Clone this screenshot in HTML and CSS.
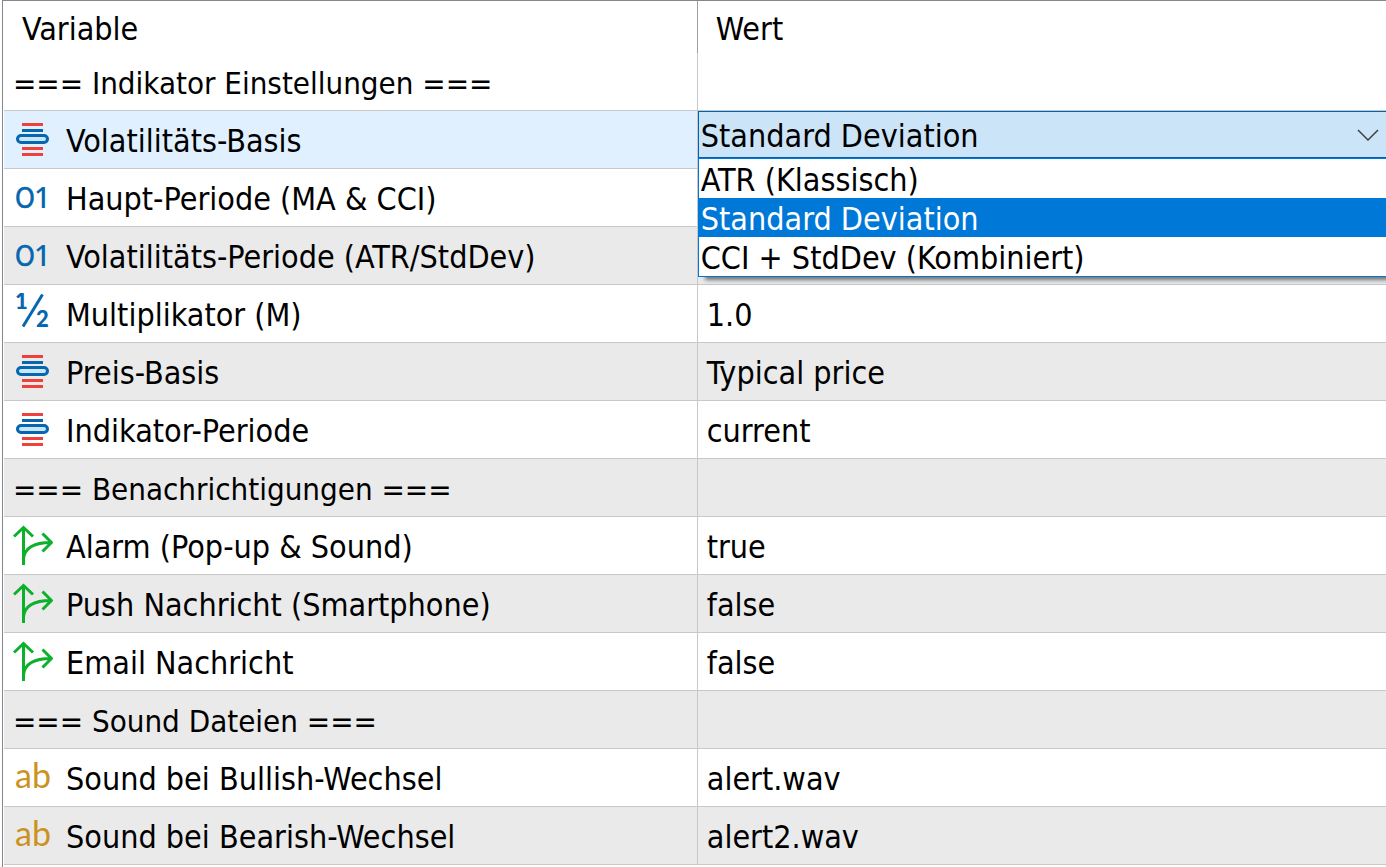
FILE: index.html
```html
<!DOCTYPE html>
<html lang="de">
<head>
    <meta charset="UTF-8">
    <meta name="viewport" content="width=device-width, initial-scale=1.0">
    <title>Indikator Einstellungen</title>
    <link rel="stylesheet" href="styles.css">
</head>
<body>
    <!-- Icons for the parameter types -->
    <svg class="sprite" aria-hidden="true">
        <symbol id="icon-enum" viewBox="0 0 40 41">
            <path d="M9 4h21v3H9zM9 28h21v3H9zM9 34h21v3H9z" fill="#ee413b"/>
            <path d="M9 10h21v3H9z" fill="#0666ae"/>
            <rect x="4.5" y="16.5" width="30" height="7" rx="3.5" fill="#c9e6fb" stroke="#0666ae" stroke-width="3"/>
        </symbol>
        <symbol id="icon-int" viewBox="0 0 40 41">
            <text class="glyph-int" x="2" y="31">O</text>
            <text class="glyph-one" x="21" y="31">1</text>
        </symbol>
        <symbol id="icon-double" viewBox="0 0 40 41">
            <text class="glyph-half" x="2" y="16">1</text>
            <path d="M29.5 1.5L10 33.5" stroke="#0666ae" stroke-width="3" fill="none"/>
            <text class="glyph-half" x="23" y="34">2</text>
        </symbol>
        <symbol id="icon-bool" viewBox="0 0 40 41">
            <path d="M10.5 40V2.5M1 11.5L10.5 2.5L20 11.5M10.5 34C11.5 23 21 17.5 38 17.5M29.5 8.5L38.5 17.5L29.5 26.5" stroke="#0db02b" stroke-width="3" fill="none"/>
        </symbol>
        <symbol id="icon-string" viewBox="0 0 40 41">
            <text class="glyph-string" x="2" y="31">ab</text>
        </symbol>
    </svg>

    <div class="panel">
        <table class="params">
            <colgroup>
                <col class="col-name">
                <col>
            </colgroup>
            <thead>
                <tr>
                    <th scope="col">Variable</th>
                    <th scope="col">Wert</th>
                </tr>
            </thead>
            <tbody>
                <tr class="section">
                    <td>=== Indikator Einstellungen ===</td>
                    <td></td>
                </tr>
                <tr class="selected">
                    <td><label class="name" for="basis"><svg class="icon"><use href="#icon-enum"/></svg>Volatilitäts-Basis</label></td>
                    <td class="editor">
                        <div class="combo">
                            <select id="basis">
                                <option>ATR (Klassisch)</option>
                                <option selected>Standard Deviation</option>
                                <option>CCI + StdDev (Kombiniert)</option>
                            </select>
                            <svg class="chevron" viewBox="0 0 22 12"><path d="M1 1L11 11L21 1" stroke="#404040" stroke-width="1.5" fill="none"/></svg>
                            <ul class="options" role="listbox" aria-label="Volatilitäts-Basis">
                                <li role="option" aria-selected="false">ATR (Klassisch)</li>
                                <li role="option" aria-selected="true" class="active">Standard Deviation</li>
                                <li role="option" aria-selected="false">CCI + StdDev (Kombiniert)</li>
                            </ul>
                        </div>
                    </td>
                </tr>
                <tr>
                    <td><div class="name"><svg class="icon"><use href="#icon-int"/></svg>Haupt-Periode (MA &amp; CCI)</div></td>
                    <td></td>
                </tr>
                <tr>
                    <td><div class="name"><svg class="icon"><use href="#icon-int"/></svg>Volatilitäts-Periode (ATR/StdDev)</div></td>
                    <td></td>
                </tr>
                <tr>
                    <td><div class="name"><svg class="icon"><use href="#icon-double"/></svg>Multiplikator (M)</div></td>
                    <td>1.0</td>
                </tr>
                <tr>
                    <td><div class="name"><svg class="icon"><use href="#icon-enum"/></svg>Preis-Basis</div></td>
                    <td>Typical price</td>
                </tr>
                <tr>
                    <td><div class="name"><svg class="icon"><use href="#icon-enum"/></svg>Indikator-Periode</div></td>
                    <td>current</td>
                </tr>
                <tr class="section">
                    <td>=== Benachrichtigungen ===</td>
                    <td></td>
                </tr>
                <tr>
                    <td><div class="name"><svg class="icon"><use href="#icon-bool"/></svg>Alarm (Pop-up &amp; Sound)</div></td>
                    <td>true</td>
                </tr>
                <tr>
                    <td><div class="name"><svg class="icon"><use href="#icon-bool"/></svg>Push Nachricht (Smartphone)</div></td>
                    <td>false</td>
                </tr>
                <tr>
                    <td><div class="name"><svg class="icon"><use href="#icon-bool"/></svg>Email Nachricht</div></td>
                    <td>false</td>
                </tr>
                <tr class="section">
                    <td>=== Sound Dateien ===</td>
                    <td></td>
                </tr>
                <tr>
                    <td><div class="name"><svg class="icon"><use href="#icon-string"/></svg>Sound bei Bullish-Wechsel</div></td>
                    <td>alert.wav</td>
                </tr>
                <tr>
                    <td><div class="name"><svg class="icon"><use href="#icon-string"/></svg>Sound bei Bearish-Wechsel</div></td>
                    <td>alert2.wav</td>
                </tr>
            </tbody>
        </table>
    </div>
</body>
</html>
```
FILE: styles.css
```css
* {
    box-sizing: border-box;
}
body {
    margin: 0;
    padding-left: 2px;
    background-color: #fff;
    color: #000;
    font-family: Tahoma, "DejaVu Sans Condensed", "DejaVu Sans", sans-serif;
    font-size: 32px;
    line-height: 36px;
}
.sprite {
    display: none;
}
.panel {
    min-height: 100vh;
    padding-left: 1px;
    border-top: 1px solid #828790;
    border-left: 1px solid #828790;
}
.params {
    width: 100%;
    table-layout: fixed;
    border-collapse: separate;
    border-spacing: 0;
}
.col-name {
    width: 50.2%;
}
th {
    height: 52px;
    padding: 3px 18px 0;
    font-weight: normal;
    text-align: left;
}
th:first-child {
    border-right: 1px solid #a0a0a0;
}
td {
    height: 58px;
    padding: 3px 9px 0;
    border-bottom: 1px solid #c8c8c8;
    white-space: nowrap;
}
td:first-child {
    border-right: 1px solid #c8c8c8;
}
tbody tr:nth-child(even) {
    background-color: #eaeaea;
}
tbody tr.selected {
    background-color: #e0f0fe;
}
.section {
    font-size: 31px;
}
.name {
    display: flex;
    align-items: center;
    gap: 13px;
}
.icon {
    flex: none;
    width: 40px;
    height: 41px;
    margin-bottom: 3px;
}
.glyph-int,
.glyph-one,
.glyph-half {
    fill: #0666ae;
    font-size: 28px;
}
.glyph-int {
    stroke: #0666ae;
    stroke-width: 0.5px;
}
.glyph-one {
    font-family: "Noto Sans", sans-serif;
    font-size: 29px;
    font-weight: 500;
}
.glyph-half {
    font-family: Lato, sans-serif;
    font-size: 22px;
    font-weight: 900;
}
.glyph-string {
    fill: #cb921f;
    font-family: Lato, sans-serif;
    font-size: 34px;
}

/* Open drop-down in the value column */
td.editor {
    padding: 0;
    vertical-align: top;
}
.combo {
    position: relative;
}
select {
    display: block;
    width: 100%;
    height: 47px;
    padding: 3px 40px 0 2px;
    border: 1px solid #0063b1;
    border-right: none;
    border-radius: 0;
    outline: none;
    background-color: #cce4f7;
    color: #000;
    font: inherit;
    appearance: none;
}
.chevron {
    position: absolute;
    top: 18px;
    right: 7px;
    width: 22px;
    height: 12px;
    pointer-events: none;
}
.options {
    position: absolute;
    top: 100%;
    left: 0;
    right: 0;
    z-index: 1;
    margin: 0;
    padding: 0;
    border: 1px solid #0078d7;
    border-right: none;
    background-color: #fff;
    box-shadow: 6px 4px 4px -1px rgba(0, 0, 0, 0.5);
    list-style: none;
}
.options li {
    padding: 3px 0 0 2px;
}
.options .active {
    background-color: #0078d7;
    color: #fff;
}
```
